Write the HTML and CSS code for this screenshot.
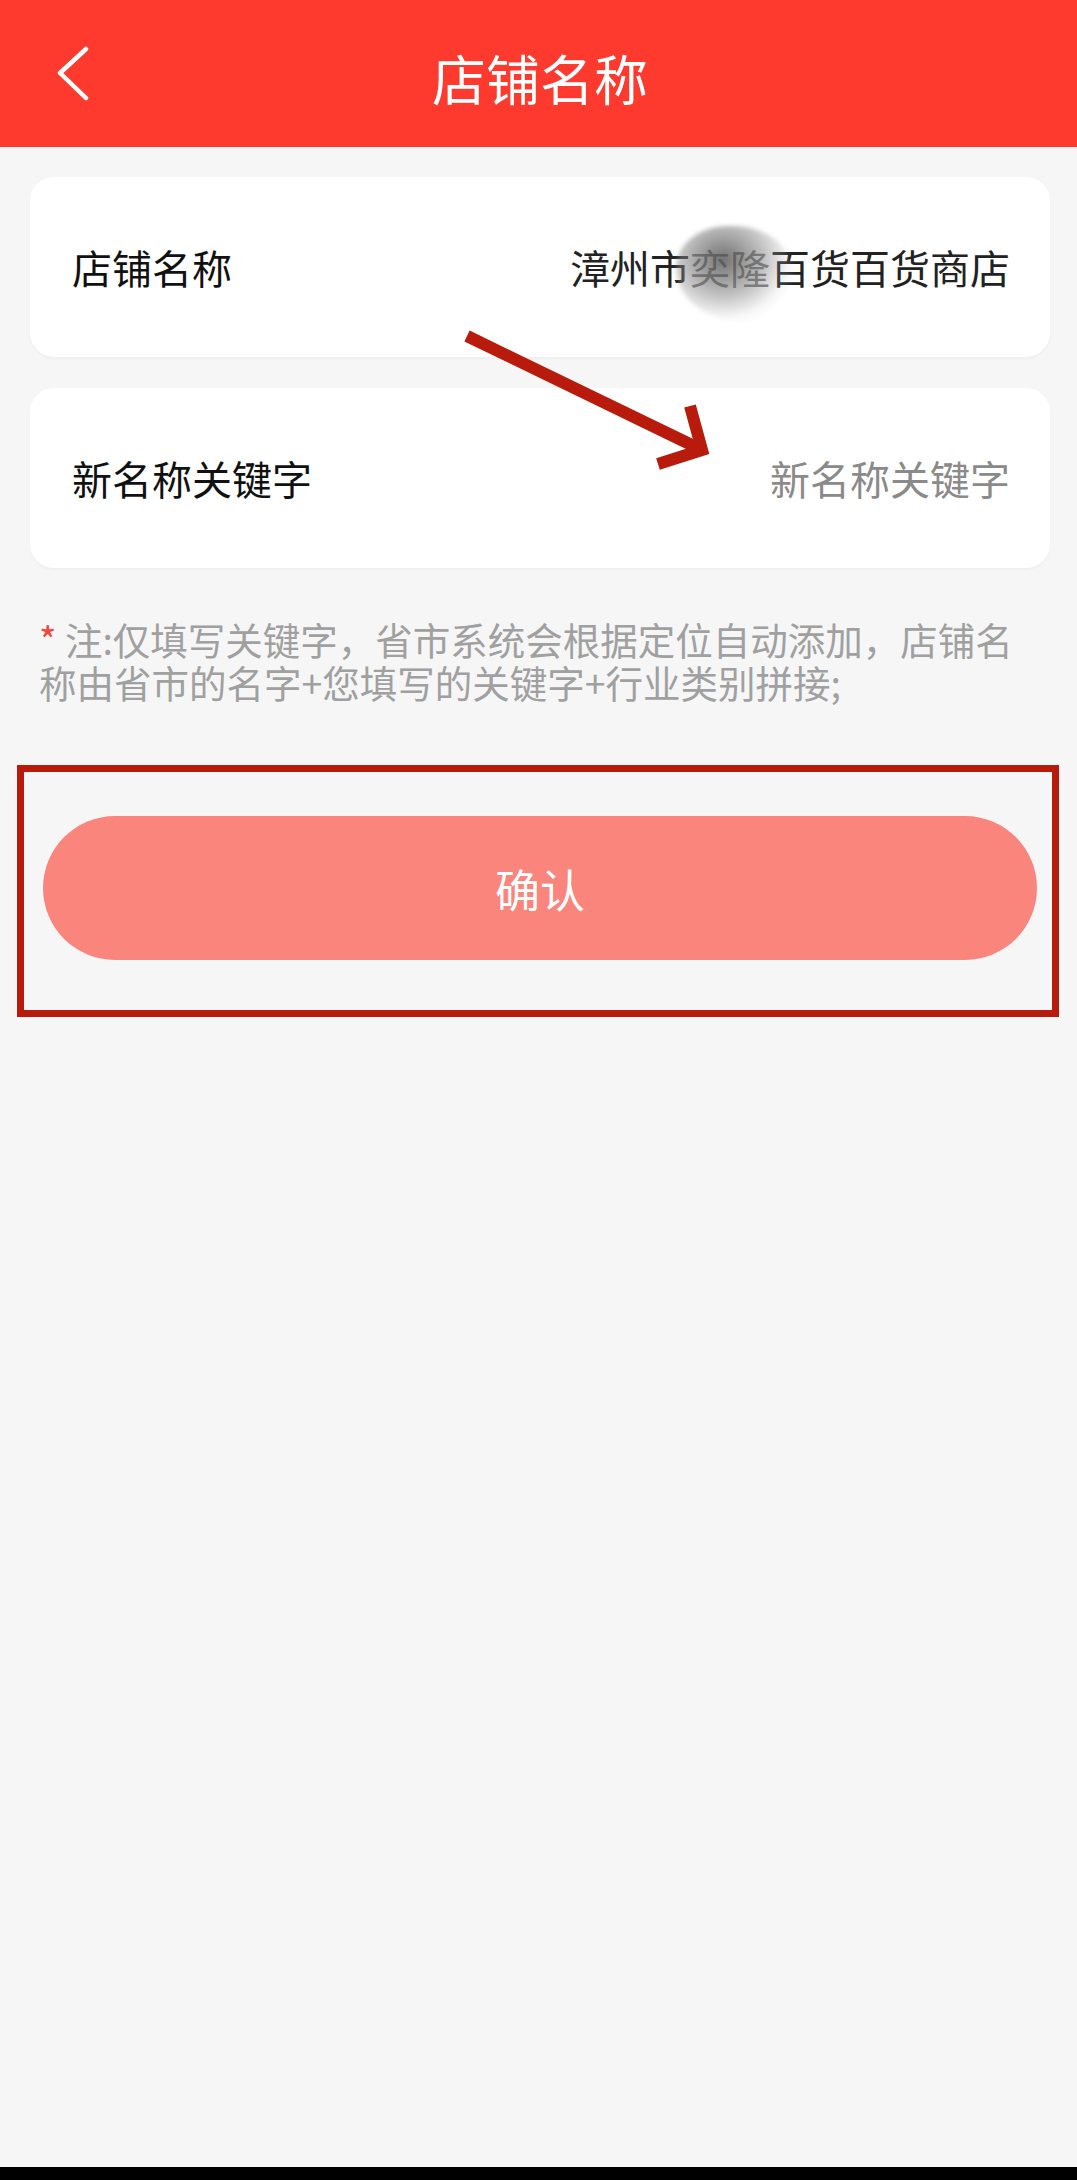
FILE: index.html
```html
<!DOCTYPE html>
<html lang="zh-CN">
<head>
    <meta charset="UTF-8">
    <meta name="viewport" content="width=device-width, initial-scale=1.0">
    <title>店铺名称</title>
    <link rel="stylesheet" href="styles.css">
</head>
<body>
    <header class="topbar">
        <div class="topbar-left">
            <svg class="back" width="34" height="56" viewBox="0 0 34 56">
                <polyline points="30,3 4,27 30,52" fill="none" stroke="#fff" stroke-width="4.5" stroke-linecap="round" stroke-linejoin="round"/>
            </svg>
        </div>
        <h1>店铺名称</h1>
        <div></div>
    </header>

    <main class="page">
        <div class="card">
            <span class="label">店铺名称</span>
            <span class="value">漳州市<span class="masked">奕隆<i class="smudge"></i></span>百货百货商店</span>
        </div>
        <div class="card">
            <span class="label">新名称关键字</span>
            <input class="field" type="text" placeholder="新名称关键字">
        </div>

        <p class="note"><span class="star">*</span> 注:仅填写关键字，省市系统会根据定位自动添加，店铺名称由省市的名字+您填写的关键字+行业类别拼接;</p>

        <div class="mark-box">
            <button type="button" class="confirm">确认</button>
        </div>
    </main>

    <div class="navbar"></div>

    <!-- annotation arrow drawn over the page -->
    <svg class="arrow" width="1077" height="600" viewBox="0 0 1077 600">
        <line x1="467" y1="336" x2="700" y2="449" stroke="#b81a0b" stroke-width="12"/>
        <polyline points="690,406 702,450 658,464" fill="none" stroke="#b81a0b" stroke-width="12" stroke-linejoin="miter"/>
    </svg>
</body>
</html>
```

FILE: styles.css
```css
body {
    margin: 0;
    padding: 0;
    font-family: "Noto Sans CJK SC", "Noto Sans", sans-serif;
    background-color: #f6f6f6;
    min-height: 100vh;
    display: flex;
    flex-direction: column;
    position: relative;
}

.topbar {
    height: 147px;
    background-color: #fe392d;
    display: grid;
    grid-template-columns: 1fr auto 1fr;
    align-items: center;
}

.topbar-left {
    display: flex;
    align-items: center;
    padding-left: 56px;
    padding-top: 1px;
}

.topbar h1 {
    margin: 0 0 0 3px;
    padding-top: 8px;
    color: #fff;
    font-size: 54px;
    font-weight: 400;
}

.page {
    flex: 1;
    padding-top: 30px;
}

.card {
    margin: 0 27px 31px 30px;
    height: 180px;
    background-color: #fff;
    border-radius: 24px;
    box-shadow: 0 2px 2px rgba(0, 0, 0, 0.03);
    display: flex;
    justify-content: space-between;
    align-items: center;
    padding: 0 40px 0 42px;
}

.label {
    font-size: 40px;
    color: #111;
}

.value {
    font-size: 40px;
    color: #222;
}

.masked {
    position: relative;
    color: #777;
}

.smudge {
    position: absolute;
    left: -14px;
    top: -12px;
    width: 118px;
    height: 96px;
    border-radius: 46% 54% 40% 60%;
    background: radial-gradient(ellipse at 40% 35%, rgba(80, 80, 80, 0.8), rgba(130, 130, 130, 0.5) 40%, rgba(200, 200, 200, 0.15) 65%, rgba(230, 230, 230, 0) 75%);
    filter: blur(2px);
}

.field {
    border: none;
    outline: none;
    background: transparent;
    font-family: inherit;
    font-size: 40px;
    text-align: right;
    width: 400px;
    padding: 0;
    color: #222;
}

.field::placeholder {
    color: #8a8a8a;
}

.note {
    margin: 49px 50px 0 39px;
    font-size: 37.5px;
    line-height: 43px;
    color: #a0a0a0;
}

.star {
    color: #f0463c;
}

.mark-box {
    margin: 62px 18px 0 17px;
    border: 7px solid #b81a0b;
    padding: 44px 15px 50px 19px;
}

.confirm {
    display: block;
    width: 100%;
    height: 144px;
    border: none;
    border-radius: 72px;
    background-color: #fa857d;
    color: #fff;
    font-family: inherit;
    font-size: 45px;
    cursor: pointer;
}

.navbar {
    height: 13px;
    background-color: #000;
}

.arrow {
    position: absolute;
    left: 0;
    top: 0;
    pointer-events: none;
}
```
